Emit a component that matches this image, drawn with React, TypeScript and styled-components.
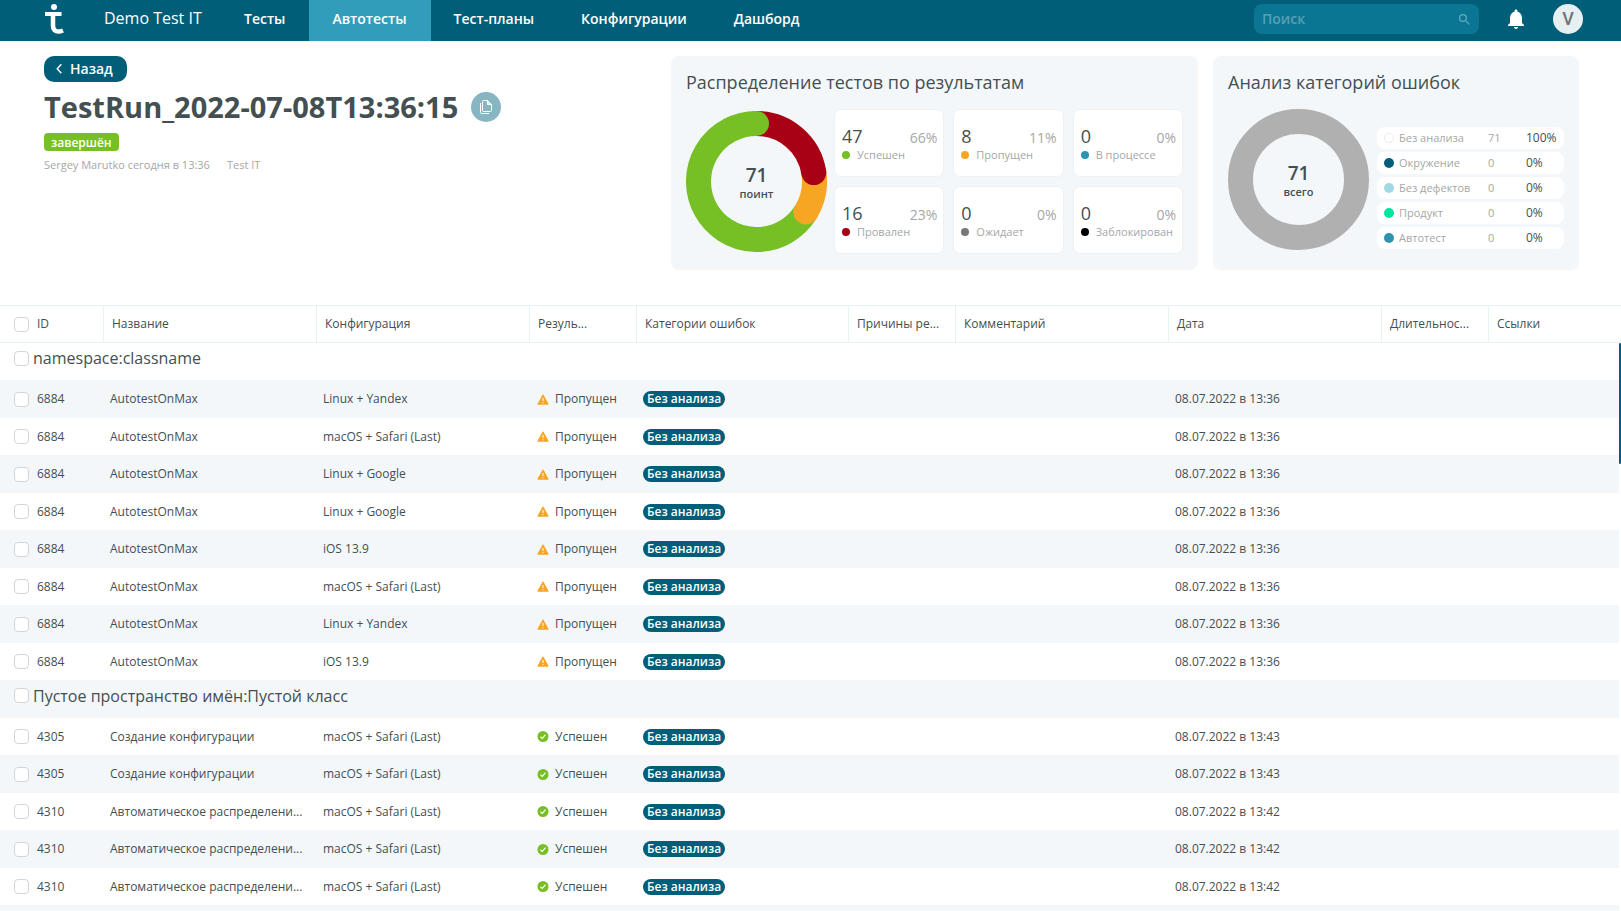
import React from "react";
import styled, { createGlobalStyle } from "styled-components";
import { MdNotifications, MdSearch } from "react-icons/md";

const color = {
  brand: "#005e78",
  brandLight: "#329dba",
  text: "#444f52",
  muted: "#a5a7a8",
  panel: "#f3f7fa",
  line: "#e8f1f4",
  green: "#76bf25",
  red: "#a80014",
  orange: "#f6a623",
};

const GlobalStyle = createGlobalStyle`
  *, *::before, *::after { box-sizing: border-box; }
  body {
    margin: 0;
    background: #fff;
    color: ${color.text};
    font-family: "Open Sans", "Noto Sans", sans-serif;
    font-size: 12px;
    line-height: 16px;
  }
  button, input { font: inherit; }
`;

const Page = styled.div`
  display: flex;
  flex-direction: column;
  height: 100vh;
  overflow: hidden;
`;

/* ---------- top bar ---------- */

const TopBar = styled.header`
  display: flex;
  flex: none;
  align-items: stretch;
  height: 41px;
  padding: 0 38px 0 44px;
  background: ${color.brand};
  color: #fff;
`;

const LogoLink = styled.a`
  display: flex;
  width: 60px;
  padding-top: 4px;
`;

const ProjectLink = styled.a`
  width: 117px;
  padding-top: 8px;
  color: #fff;
  font-size: 16px;
  line-height: 20px;
  text-decoration: none;
  white-space: nowrap;
`;

const Nav = styled.nav`
  display: flex;
`;

const NavLink = styled.a<{ $active?: boolean }>`
  padding: 9px 24px 0 23px;
  background: ${(p) => (p.$active ? color.brandLight : "transparent")};
  color: #fff;
  font-size: 14px;
  font-weight: 600;
  line-height: 20px;
  text-decoration: none;
  white-space: nowrap;
`;

const Tools = styled.div`
  display: flex;
  align-items: center;
  height: 30px;
  margin-top: 4px;
  margin-left: auto;
`;

const SearchBox = styled.label`
  display: flex;
  align-items: center;
  width: 225px;
  height: 30px;
  padding: 0 7px 0 8px;
  border-radius: 8px;
  background: #0a7694;
  color: #62a9bd;
`;

const SearchInput = styled.input`
  flex: 1;
  min-width: 0;
  padding: 0;
  border: 0;
  outline: 0;
  background: none;
  color: #fff;
  font-size: 14px;
  font-weight: 600;
  &::placeholder { color: #55a0b5; opacity: 1; }
`;

const BellButton = styled.button`
  display: flex;
  margin: 0 25px;
  padding: 0;
  border: 0;
  background: none;
  color: #fff;
`;

const Avatar = styled.button`
  width: 30px;
  height: 30px;
  padding: 0;
  border: 0;
  border-radius: 50%;
  background: #e6eff2;
  color: #6f7577;
  font: 500 18px/30px Roboto, sans-serif;
`;

/* ---------- summary ---------- */

const Summary = styled.section`
  display: flex;
  flex: none;
  gap: 15px;
  padding: 15px 42px 35px 44px;
`;

const RunInfo = styled.div`
  display: flex;
  flex: 1;
  flex-direction: column;
  align-items: flex-start;
  min-width: 0;
`;

const BackButton = styled.button`
  display: flex;
  align-items: center;
  gap: 8px;
  height: 26px;
  padding: 0 14px 0 12px;
  border: 0;
  border-radius: 10px;
  background: ${color.brand};
  color: #fff;
  font-size: 14px;
  font-weight: 600;
`;

const TitleRow = styled.div`
  display: flex;
  align-items: center;
  gap: 13px;
  height: 30px;
  margin-top: 10px;
`;

const RunTitle = styled.h1`
  margin: 0;
  font-size: 29px;
  font-weight: 700;
  line-height: 30px;
  white-space: nowrap;
`;

const CopyButton = styled.button`
  display: flex;
  align-items: center;
  justify-content: center;
  width: 30px;
  height: 30px;
  padding: 0;
  border: 0;
  border-radius: 50%;
  background: #87b5c2;
`;

const RunState = styled.span`
  height: 18px;
  margin-top: 11px;
  padding: 0 7px;
  border-radius: 4px;
  background: ${color.green};
  color: #fff;
  font-weight: 600;
  line-height: 19px;
`;

const Meta = styled.div`
  display: flex;
  gap: 17px;
  margin-top: 6px;
  color: ${color.muted};
  font-size: 11px;
  font-weight: 500;
`;

const Panel = styled.section<{ $width: number }>`
  flex: none;
  width: ${(p) => p.$width}px;
  height: 214px;
  padding: 15px;
  border-radius: 8px;
  background: ${color.panel};
`;

const PanelTitle = styled.h2`
  margin: 0 0 16px;
  font-size: 18px;
  font-weight: 500;
  line-height: 22px;
`;

const PanelBody = styled.div`
  display: flex;
  gap: 7px;
`;

const Donut = styled.figure`
  display: grid;
  flex: none;
  align-items: center;
  justify-items: center;
  width: 141px;
  height: 141px;
  margin: 0;
  > * { grid-area: 1 / 1; }
`;

const ResultDonut = styled(Donut)`
  margin-top: 2px;
`;

const DonutLabel = styled.figcaption`
  display: flex;
  flex-direction: column;
  align-items: center;
  padding-top: 3px;
  font-size: 11px;
  font-weight: 600;
`;

const DonutTotal = styled.span`
  font-size: 19px;
  line-height: 22px;
`;

const StatGrid = styled.div`
  display: grid;
  flex: 1;
  grid-template-columns: repeat(3, 1fr);
  grid-auto-rows: 68px;
  gap: 9px;
`;

const StatCard = styled.div`
  padding: 16px 6px 0 7px;
  border: 1px solid #eef2f4;
  border-radius: 7px;
  background: #fff;
`;

const StatFigures = styled.div`
  display: flex;
  align-items: baseline;
  justify-content: space-between;
  height: 21px;
`;

const StatCount = styled.span`
  font-size: 18px;
  line-height: 20px;
`;

const StatShare = styled.span`
  color: ${color.muted};
  font-size: 14px;
  line-height: 16px;
`;

const StatName = styled.div`
  display: flex;
  align-items: center;
  gap: 7px;
  color: ${color.muted};
  font-size: 11px;
  font-weight: 500;
  white-space: nowrap;
`;

const Dot = styled.span<{ $size: number; $fill: string; $ring?: boolean }>`
  flex: none;
  width: ${(p) => p.$size}px;
  height: ${(p) => p.$size}px;
  border: ${(p) => (p.$ring ? "1px solid #ebebeb" : "0")};
  border-radius: 50%;
  background: ${(p) => p.$fill};
`;

const Legend = styled.ul`
  display: flex;
  flex: 1;
  flex-direction: column;
  gap: 3px;
  margin: 18px 0 0 1px;
  padding: 0;
  list-style: none;
`;

const LegendRow = styled.li`
  display: grid;
  grid-template-columns: 10px 94px 38px 1fr;
  align-items: center;
  height: 22px;
  padding-left: 7px;
  border-radius: 8px;
  background: #fff;
  color: ${color.muted};
  font-size: 11px;
  font-weight: 500;
  white-space: nowrap;
`;

const LegendName = styled.span`
  padding-left: 5px;
`;

const LegendShare = styled.span`
  color: ${color.text};
  font-size: 12px;
  font-weight: 400;
`;

/* ---------- table ---------- */

const TableArea = styled.main`
  position: relative;
  flex: 1;
  min-height: 0;
  overflow: hidden;
`;

const Table = styled.table`
  width: 100%;
  border-collapse: separate;
  border-spacing: 0;
  table-layout: fixed;
`;

const Col = styled.col<{ $width?: number }>`
  width: ${(p) => (p.$width ? `${p.$width}px` : "auto")};
`;

const HeadCell = styled.th`
  height: 38px;
  padding: 0 8px;
  border: solid ${color.line};
  border-width: 1px 0 1px 1px;
  font-weight: 400;
  text-align: left;
  white-space: nowrap;
  &:first-child { padding-left: 14px; border-left: 0; }
`;

const Row = styled.tr`
  height: 37px;
  &:nth-child(even) { height: 38px; background: ${color.panel}; }
`;

const Cell = styled.td`
  padding: 0 7px;
  white-space: nowrap;
  &:first-child { padding-left: 14px; }
`;

const GroupCell = styled.td`
  padding: 0 14px 7px;
`;

const CheckLabel = styled.label<{ $group?: boolean }>`
  display: flex;
  align-items: center;
  gap: ${(p) => (p.$group ? 4 : 8)}px;
  font-size: ${(p) => (p.$group ? 16 : 12)}px;
`;

const Checkbox = styled.input`
  flex: none;
  width: 15px;
  height: 15px;
  margin: 0;
  border: 1px solid #d3d6d8;
  border-radius: 4px;
  appearance: none;
  background: #fff;
`;

const Result = styled.span`
  display: flex;
  align-items: center;
  gap: 6px;
  padding-left: 1px;
`;

const Category = styled.span`
  display: block;
  width: fit-content;
  height: 16px;
  padding: 0 4px;
  border-radius: 8px;
  background: ${color.brand};
  color: #fff;
  font-weight: 600;
  line-height: 16px;
`;

const ScrollTrack = styled.div`
  position: absolute;
  top: 38px;
  right: 0;
  bottom: 0;
  width: 2px;
  background: #fff;
`;

const ScrollThumb = styled.div`
  height: 121px;
  border-radius: 2px;
  background: ${color.brand};
`;

/* ---------- drawings ---------- */

const Logo = () => (
  <svg width="20" height="30" viewBox="0 0 20 30" fill="none" aria-hidden="true">
    <circle cx="10" cy="3" r="3" fill="#fff" />
    <path d="M1 10h16.500" stroke="#fff" strokeWidth="4" />
    <path d="M9 9v12.500c0 5.500 4 7.500 10 5" stroke="#fff" strokeWidth="4.500" />
  </svg>
);

const Chevron = () => (
  <svg width="6" height="12" viewBox="0 0 6 12" fill="none" aria-hidden="true">
    <path d="M5.300 1.200 1.200 5.700l4.100 4.500" stroke="#fff" strokeWidth="1.400" />
  </svg>
);

const CopyIcon = () => (
  <svg width="12" height="14" viewBox="0 0 12 14" fill="none" stroke="#fff" aria-hidden="true">
    <path d="M2.500 1.500a1 1 0 0 1 1-1h4l4 4v6a1 1 0 0 1-1 1h-7a1 1 0 0 1-1-1z" />
    <path d="M7.500.5v4h4z" fill="#dcebef" />
    <path d="M.5 3v9.500a1 1 0 0 0 1 1H9" />
  </svg>
);

const WarningIcon = () => (
  <svg width="12" height="11" viewBox="0 0 12 11" aria-hidden="true">
    <path d="M6 .8 11.200 10.200H.8z" fill={color.orange} stroke={color.orange} strokeLinejoin="round" />
    <path d="M6 4v3M6 8.200v1" stroke="#fff" strokeWidth="1.100" />
  </svg>
);

const PassedIcon = () => (
  <svg width="12" height="11" viewBox="0 0 12 11" fill="none" aria-hidden="true">
    <circle cx="6" cy="5.500" r="5.500" fill={color.green} />
    <path d="m3.500 5.800 1.800 1.700 3.200-3.800" stroke="#fff" strokeWidth="1.200" />
  </svg>
);

const R = 58;
const C = 70.5;
const point = (share: number) => {
  const a = share * 2 * Math.PI;
  return [C + R * Math.sin(a), C - R * Math.cos(a)];
};

const Arc = ({ from, to, stroke }: { from: number; to: number; stroke: string }) => {
  const [x1, y1] = point(from);
  const [x2, y2] = point(to);
  return (
    <>
      <path
        d={`M${x1} ${y1}A${R} ${R} 0 ${to - from > 0.5 ? 1 : 0} 1 ${x2} ${y2}`}
        stroke={stroke}
        strokeWidth="25"
        fill="none"
      />
      <circle cx={x2} cy={y2} r="12.500" fill={stroke} />
    </>
  );
};

/* ---------- data ---------- */

const tabs = ["Тесты", "Автотесты", "Тест-планы", "Конфигурации", "Дашборд"];

const stats = [
  { name: "Успешен", count: 47, share: "66%", fill: color.green },
  { name: "Пропущен", count: 8, share: "11%", fill: color.orange },
  { name: "В процессе", count: 0, share: "0%", fill: "#2994b5" },
  { name: "Провален", count: 16, share: "23%", fill: color.red },
  { name: "Ожидает", count: 0, share: "0%", fill: "#787878" },
  { name: "Заблокирован", count: 0, share: "0%", fill: "#000" },
];

const categories = [
  { name: "Без анализа", count: 71, share: "100%", fill: "#fff" },
  { name: "Окружение", count: 0, share: "0%", fill: "#005e78" },
  { name: "Без дефектов", count: 0, share: "0%", fill: "#a3d8e5" },
  { name: "Продукт", count: 0, share: "0%", fill: "#00e5a0" },
  { name: "Автотест", count: 0, share: "0%", fill: "#2f93ae" },
];

const columns: { title: string; width?: number }[] = [
  { title: "ID", width: 103 },
  { title: "Название", width: 213 },
  { title: "Конфигурация", width: 213 },
  { title: "Резуль...", width: 107 },
  { title: "Категории ошибок", width: 212 },
  { title: "Причины ре...", width: 107 },
  { title: "Комментарий", width: 213 },
  { title: "Дата", width: 213 },
  { title: "Длительнос...", width: 107 },
  { title: "Ссылки" },
];

type Test = { id: number; name: string; config: string; passed?: boolean; date: string };

const skipped = (config: string): Test => ({
  id: 6884,
  name: "AutotestOnMax",
  config,
  date: "08.07.2022 в 13:36",
});

const passed = (id: number, name: string, date: string): Test => ({
  id,
  name,
  config: "macOS + Safari (Last)",
  passed: true,
  date,
});

const longName = "Автоматическое распределени...";

const groups: { title: string; tests: Test[] }[] = [
  {
    title: "namespace:classname",
    tests: [
      skipped("Linux + Yandex"),
      skipped("macOS + Safari (Last)"),
      skipped("Linux + Google"),
      skipped("Linux + Google"),
      skipped("iOS 13.9"),
      skipped("macOS + Safari (Last)"),
      skipped("Linux + Yandex"),
      skipped("iOS 13.9"),
    ],
  },
  {
    title: "Пустое пространство имён:Пустой класс",
    tests: [
      passed(4305, "Создание конфигурации", "08.07.2022 в 13:43"),
      passed(4305, "Создание конфигурации", "08.07.2022 в 13:43"),
      passed(4310, longName, "08.07.2022 в 13:42"),
      passed(4310, longName, "08.07.2022 в 13:42"),
      passed(4310, longName, "08.07.2022 в 13:42"),
    ],
  },
];

const TestRow = ({ test }: { test: Test }) => (
  <Row>
    <Cell>
      <CheckLabel>
        <Checkbox type="checkbox" />
        {test.id}
      </CheckLabel>
    </Cell>
    <Cell>{test.name}</Cell>
    <Cell>{test.config}</Cell>
    <Cell>
      <Result>
        {test.passed ? <PassedIcon /> : <WarningIcon />}
        {test.passed ? "Успешен" : "Пропущен"}
      </Result>
    </Cell>
    <Cell>
      <Category>Без анализа</Category>
    </Cell>
    <Cell />
    <Cell />
    <Cell>{test.date}</Cell>
    <Cell />
    <Cell />
  </Row>
);

export default function App() {
  return (
    <Page>
      <GlobalStyle />
      <TopBar>
        <LogoLink href="#" aria-label="Test IT">
          <Logo />
        </LogoLink>
        <ProjectLink href="#">Demo Test IT</ProjectLink>
        <Nav>
          {tabs.map((tab) => (
            <NavLink key={tab} href="#" $active={tab === "Автотесты"}>
              {tab}
            </NavLink>
          ))}
        </Nav>
        <Tools>
          <SearchBox>
            <SearchInput type="search" placeholder="Поиск" aria-label="Поиск" />
            <MdSearch size={15} />
          </SearchBox>
          <BellButton aria-label="Уведомления">
            <MdNotifications size={24} />
          </BellButton>
          <Avatar>V</Avatar>
        </Tools>
      </TopBar>

      <Summary>
        <RunInfo>
          <BackButton>
            <Chevron />
            Назад
          </BackButton>
          <TitleRow>
            <RunTitle>TestRun_2022-07-08T13:36:15</RunTitle>
            <CopyButton aria-label="Копировать">
              <CopyIcon />
            </CopyButton>
          </TitleRow>
          <RunState>завершён</RunState>
          <Meta>
            <span>Sergey Marutko сегодня в 13:36</span>
            <span>Test IT</span>
          </Meta>
        </RunInfo>

        <Panel $width={527}>
          <PanelTitle>Распределение тестов по результатам</PanelTitle>
          <PanelBody>
            <ResultDonut>
              <svg width="141" height="141" viewBox="0 0 141 141" aria-hidden="true">
                <Arc from={24 / 71} to={0.9999} stroke={color.green} />
                <Arc from={16 / 71} to={24 / 71} stroke={color.orange} />
                <Arc from={0} to={16 / 71} stroke={color.red} />
                <circle cx={C} cy={C - R} r="12.500" fill={color.green} />
              </svg>
              <DonutLabel>
                <DonutTotal>71</DonutTotal>
                поинт
              </DonutLabel>
            </ResultDonut>
            <StatGrid>
              {stats.map((s) => (
                <StatCard key={s.name}>
                  <StatFigures>
                    <StatCount>{s.count}</StatCount>
                    <StatShare>{s.share}</StatShare>
                  </StatFigures>
                  <StatName>
                    <Dot $size={8} $fill={s.fill} />
                    {s.name}
                  </StatName>
                </StatCard>
              ))}
            </StatGrid>
          </PanelBody>
        </Panel>

        <Panel $width={366}>
          <PanelTitle>Анализ категорий ошибок</PanelTitle>
          <PanelBody>
            <Donut>
              <svg width="141" height="141" viewBox="0 0 141 141" aria-hidden="true">
                <circle cx={C} cy={C} r={R} fill="none" stroke="#b0b0b0" strokeWidth="25" />
              </svg>
              <DonutLabel>
                <DonutTotal>71</DonutTotal>
                всего
              </DonutLabel>
            </Donut>
            <Legend>
              {categories.map((c) => (
                <LegendRow key={c.name}>
                  <Dot $size={10} $fill={c.fill} $ring={c.fill === "#fff"} />
                  <LegendName>{c.name}</LegendName>
                  <span>{c.count}</span>
                  <LegendShare>{c.share}</LegendShare>
                </LegendRow>
              ))}
            </Legend>
          </PanelBody>
        </Panel>
      </Summary>

      <TableArea>
        <Table>
          <colgroup>
            {columns.map((c) => (
              <Col key={c.title} $width={c.width} />
            ))}
          </colgroup>
          <thead>
            <tr>
              {columns.map((c, i) => (
                <HeadCell key={c.title} scope="col">
                  {i === 0 ? (
                    <CheckLabel>
                      <Checkbox type="checkbox" />
                      {c.title}
                    </CheckLabel>
                  ) : (
                    c.title
                  )}
                </HeadCell>
              ))}
            </tr>
          </thead>
          <tbody>
            {groups.map((g) => (
              <React.Fragment key={g.title}>
                <Row>
                  <GroupCell colSpan={columns.length}>
                    <CheckLabel $group>
                      <Checkbox type="checkbox" />
                      {g.title}
                    </CheckLabel>
                  </GroupCell>
                </Row>
                {g.tests.map((t, i) => (
                  <TestRow key={i} test={t} />
                ))}
              </React.Fragment>
            ))}
            <Row>
              <GroupCell colSpan={columns.length} />
            </Row>
          </tbody>
        </Table>
        <ScrollTrack>
          <ScrollThumb />
        </ScrollTrack>
      </TableArea>
    </Page>
  );
}
